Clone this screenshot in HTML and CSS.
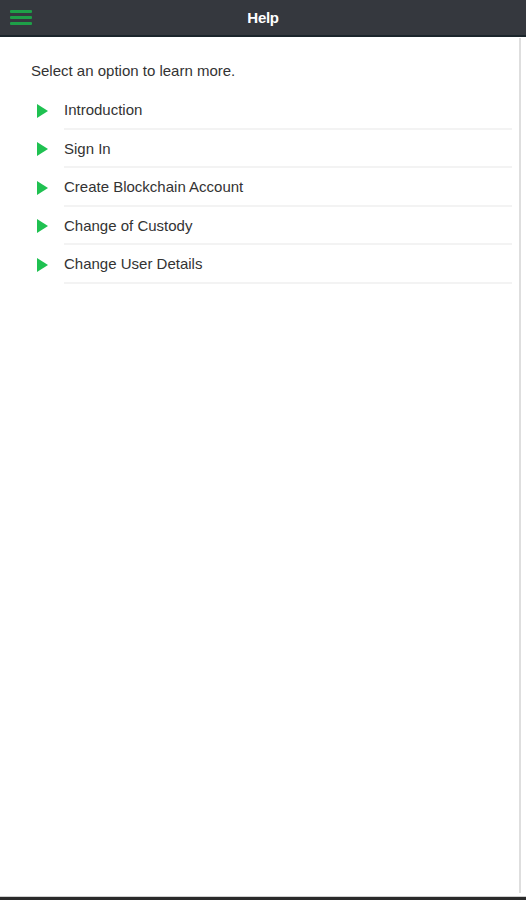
FILE: index.html
```html
<!DOCTYPE html>
<html>
<head>
<meta charset="utf-8">
<link rel="stylesheet" href="styles.css">
</head>
<body>
<div class="app">
  <header class="topbar">
    <div class="menu-btn">
      <span class="bar"></span><span class="bar"></span><span class="bar"></span>
    </div>
    <h1 class="title">Help</h1>
  </header>
  <div class="body-row">
    <main class="content">
      <p class="intro">Select an option to learn more.</p>
      <ul class="topics">
        <li class="topic"><span class="arrow"></span><span class="label">Introduction</span></li>
        <li class="topic"><span class="arrow"></span><span class="label">Sign In</span></li>
        <li class="topic"><span class="arrow"></span><span class="label">Create Blockchain Account</span></li>
        <li class="topic"><span class="arrow"></span><span class="label">Change of Custody</span></li>
        <li class="topic"><span class="arrow"></span><span class="label">Change User Details</span></li>
      </ul>
    </main>
    <div class="scroll-line"></div>
  </div>
  <footer class="bottom-edge"></footer>
</div>
</body>
</html>
```

FILE: styles.css
```css
html, body {
  margin: 0;
  padding: 0;
  background: #ffffff;
}
body {
  font-family: "Liberation Sans", Arial, sans-serif;
  color: #333333;
}
.app {
  display: flex;
  flex-direction: column;
  height: 900px;
  width: 526px;
}
.topbar {
  height: 35px;
  background: #35383e;
  border-bottom: 2px solid #1b252b;
  display: flex;
  align-items: center;
  position: relative;
  flex: none;
}
.menu-btn {
  display: flex;
  flex-direction: column;
  gap: 3px;
  margin-left: 10px;
  width: 22px;
}
.bar {
  display: block;
  height: 3px;
  background: #1e9f48;
  border-radius: 1px;
}
.title {
  margin: 0;
  flex: 1;
  text-align: center;
  font-size: 15px;
  font-weight: bold;
  color: #ffffff;
  margin-right: 32px;
  letter-spacing: -0.3px;
}
.body-row {
  flex: 1;
  display: flex;
}
.content {
  flex: 1;
  padding: 26px 7px 0 31px;
}
.intro {
  margin: 0 0 12px 0;
  font-size: 15px;
  line-height: 16px;
  color: #333333;
}
.topics {
  list-style: none;
  margin: 0;
  padding: 0 0 0 6px;
}
.topic {
  display: flex;
  align-items: stretch;
}
.arrow {
  width: 0;
  height: 0;
  border-top: 7px solid transparent;
  border-bottom: 7px solid transparent;
  border-left: 11px solid #1fc151;
  align-self: center;
  margin-right: 16px;
  margin-top: 1px;
}
.label {
  flex: 1;
  height: 36.5px;
  line-height: 38px;
  font-size: 15px;
  color: #333333;
  border-bottom: 2px solid #f3f3f3;
}
.scroll-line {
  width: 2px;
  background: #dedede;
  margin: 1px 5px 3px 0;
}
.bottom-edge {
  flex: none;
  height: 3px;
  border-top: 1px solid #d0d0d0;
  background: #2a2a2a;
}
```
